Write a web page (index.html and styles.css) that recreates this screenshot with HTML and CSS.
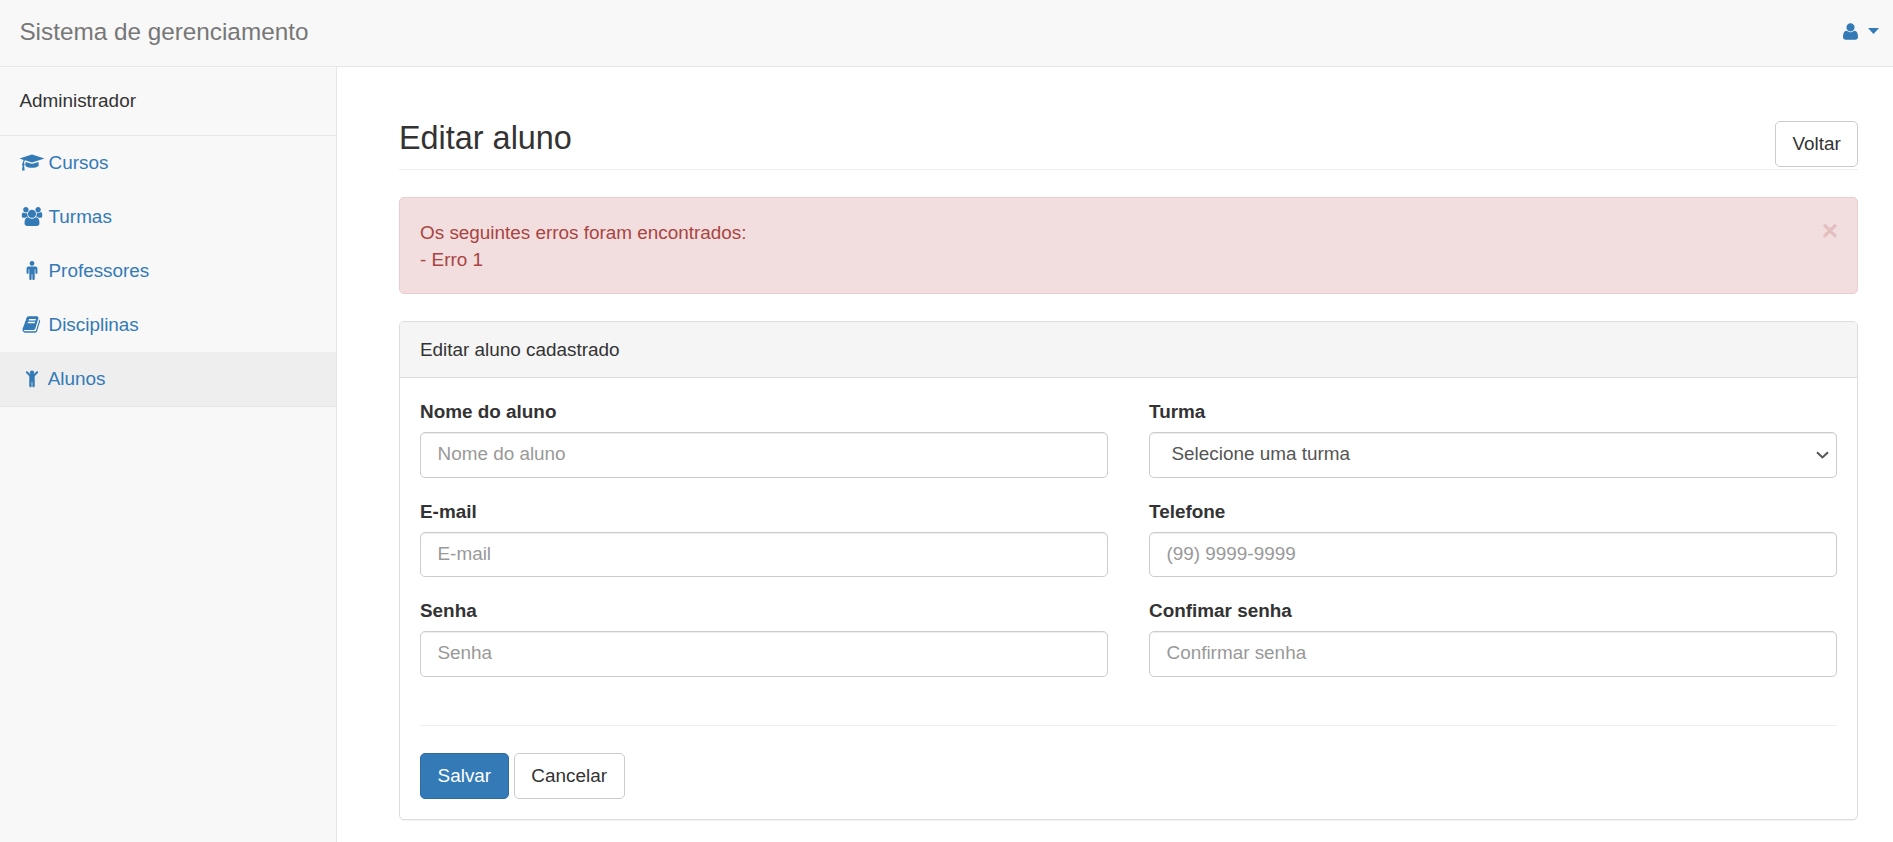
FILE: index.html
```html
<!DOCTYPE html>
<html lang="pt-BR">
<head>
<meta charset="utf-8">
<title>Editar aluno</title>
<link rel="stylesheet" href="styles.css">
</head>
<body>
<header class="navbar">
  <a class="brand">Sistema de gerenciamento</a>
  <a class="user-menu">
    <svg class="icon icon-user" viewBox="0 0 1792 1792"><path d="M1600 1405q0 120-73 189.5t-194 69.5h-874q-121 0-194-69.5t-73-189.5q0-53 3.5-103.5t14-109 26.5-108.5 43-97.5 62-81 85.5-53.5 111.5-20q9 0 42 21.5t74.5 48 108 48 133.5 21.5 133.5-21.5 108-48 74.5-48 42-21.5q61 0 111.5 20t85.5 53.5 62 81 43 97.5 26.5 108.5 14 109 3.5 103.5zm-320-893q0 159-112.5 271.5t-271.5 112.5-271.5-112.5-112.5-271.5 112.5-271.5 271.5-112.5 271.5 112.5 112.5 271.5z"/></svg>
    <svg class="caret" viewBox="0 0 11 6"><path d="M0 0h11L5.5 6z"/></svg>
  </a>
</header>
<div class="layout">
  <nav class="sidebar">
    <div class="role">Administrador</div>
    <a class="item"><svg class="icon" viewBox="0 0 2304 1792"><path d="M1774 836l18 316q4 69-82 128t-235 93.5-323 34.5-323-34.5-235-93.5-82-128l18-316 574 181q22 7 48 7t48-7zm530-324q0 23-22 31l-1120 352q-4 1-10 1t-10-1l-652-206q-43 34-71 111.5t-34 178.5q63 36 63 109 0 69-58 107l58 433q2 14-8 25-9 11-24 11h-192q-15 0-24-11-10-11-8-25l58-433q-58-38-58-107 0-73 65-111 11-207 98-330l-333-104q-22-8-22-31t22-31l1120-352q4-1 10-1t10 1l1120 352q22 8 22 31z"/></svg>Cursos</a>
    <a class="item"><svg class="icon" viewBox="0 0 2048 1792"><path d="M657 896q-162 5-265 128h-134q-82 0-138-40.5t-56-118.5q0-353 124-353 6 0 43.5 21t97.5 42.5 119 21.5q67 0 133-23-5 37-5 66 0 159 90 292zm1071 637q0 120-73 189.5t-194 69.5h-874q-121 0-194-69.5t-73-189.5q0-53 3.5-103.5t14-109 26.5-108.5 43-97.5 62-81 85.5-53.5 111.5-20q10 0 43 21.5t73 48 107 48 135 21.5 135-21.5 107-48 73-48 43-21.5q61 0 111.5 20t85.5 53.5 62 81 43 97.5 26.5 108.5 14 109 3.5 103.5zm-1024-1277q0 106-75 181t-181 75-181-75-75-181 75-181 181-75 181 75 75 181zm704 384q0 159-112.5 271.5t-271.5 112.5-271.5-112.5-112.5-271.5 112.5-271.5 271.5-112.5 271.5 112.5 112.5 271.5zm576 225q0 78-56 118.5t-138 40.5h-134q-103-123-265-128 90-133 90-292 0-29-5-66 66 23 133 23 59 0 119-21.5t97.5-42.5 43.5-21q124 0 124 353zm-128-609q0 106-75 181t-181 75-181-75-75-181 75-181 181-75 181 75 75 181z"/></svg>Turmas</a>
    <a class="item"><svg class="icon" viewBox="0 0 1792 1792"><path d="M1408 704v416q0 40-28 68t-68 28-68-28-28-68v-352h-64v912q0 46-33 79t-79 33-79-33-33-79v-464h-64v464q0 46-33 79t-79 33-79-33-33-79v-912h-64v352q0 40-28 68t-68 28-68-28-28-68v-416q0-80 56-136t136-56h640q80 0 136 56t56 136z"/><circle cx="896" cy="224" r="224"/></svg>Professores</a>
    <a class="item"><svg class="icon" viewBox="0 0 1792 1792"><path d="M1639 478q40 57 18 129l-275 906q-19 64-76.5 107.5t-122.5 43.5h-923q-77 0-148.5-53.5t-99.5-131.5q-24-67-2-127 0-4 3-27t4-37q1-8-3-21.5t-3-19.5q2-11 8-21t16.5-23.5 16.5-23.5q23-38 45-91.5t30-91.5q3-10 .5-30t-.5-28q3-11 17-28t17-23q21-36 42-92t25-90q1-9-2.5-32t.5-28q4-13 22-30.5t22-22.5q19-26 42.5-84.5t27.5-96.5q1-8-3-25.5t-2-26.5q2-8 9-18t18-23 17-21q8-12 16.5-30.5t15-35 16-36 19.5-32 26.5-23.5 36-11.5 47.5 5.5l-1 3q38-9 51-9h761q74 0 114 56t18 130l-274 906q-36 119-71.5 153.5t-128.5 34.5h-869q-27 0-38 15-11 16-1 43 24 70 144 70h923q29 0 56-15.5t35-41.5l300-987q7-22 5-57 38 15 59 43zm-1064 2q-4 13 2 22.5t20 9.5h608q13 0 25.5-9.5t16.5-22.5l21-64q4-13-2-22.5t-20-9.5h-608q-13 0-25.5 9.5t-16.5 22.5zm-83 256q-4 13 2 22.5t20 9.5h608q13 0 25.5-9.5t16.5-22.5l21-64q4-13-2-22.5t-20-9.5h-608q-13 0-25.5 9.5t-16.5 22.5z"/></svg>Disciplinas</a>
    <a class="item active"><svg class="icon" viewBox="0 0 1792 1792"><path d="M1444 380l-292 292v940q0 46-33 79t-79 33-79-33-33-79v-400h-64v400q0 46-33 79t-79 33-79-33-33-79v-940l-292-292q-28-28-28-68t28-68 68-28 68 28l228 228h368l228-228q28-28 68-28t68 28 28 68-28 68z"/><circle cx="896" cy="340" r="204"/></svg>Alunos</a>
  </nav>
  <main class="content">
    <div class="page-header">
      <h1>Editar aluno</h1>
      <button class="btn btn-back">Voltar</button>
    </div>
    <div class="alert">
      <div>Os seguintes erros foram encontrados:<br>- Erro 1</div>
      <span class="close">×</span>
    </div>
    <section class="panel">
      <div class="panel-heading">Editar aluno cadastrado</div>
      <form class="panel-body">
        <div class="fields">
          <label class="field">Nome do aluno<input class="control" type="text" placeholder="Nome do aluno"></label>
          <label class="field">Turma
            <span class="select-wrap">
              <select class="control select"><option>Selecione uma turma</option></select>
              <svg class="chevron" viewBox="0 0 13 8"><path d="M1 1.2l5.5 5.2L12 1.2"/></svg>
            </span>
          </label>
          <label class="field">E-mail<input class="control" type="email" placeholder="E-mail"></label>
          <label class="field">Telefone<input class="control" type="text" placeholder="(99) 9999-9999"></label>
          <label class="field">Senha<input class="control" type="password" placeholder="Senha"></label>
          <label class="field">Confimar senha<input class="control" type="password" placeholder="Confirmar senha"></label>
        </div>
        <div class="actions">
          <button class="btn btn-primary" type="button">Salvar</button>
          <button class="btn" type="button">Cancelar</button>
        </div>
      </form>
    </section>
  </main>
</div>
</body>
</html>
```

FILE: styles.css
```css
* { box-sizing: border-box; }
body {
  margin: 0;
  height: 842px;
  overflow: hidden;
  display: flex;
  flex-direction: column;
  background: #fff;
  color: #333;
  font: 18.9px/27px "Liberation Sans", Arial, sans-serif;
}
.navbar {
  flex: none;
  height: 67px;
  display: flex;
  justify-content: space-between;
  align-items: center;
  padding: 0 14px 2px 19.4px;
  background: #f8f8f8;
  border-bottom: 1px solid #e7e7e7;
}
.brand { padding-bottom: 1px; color: #777; font-size: 24.3px; }
.user-menu {
  display: flex;
  align-items: center;
  gap: 8px;
  padding-bottom: 2px;
  color: #337ab7;
}
.icon { width: 24px; height: 19px; flex: none; fill: currentColor; }
.icon-user { width: 19px; }
.caret { width: 11px; height: 6px; fill: currentColor; }
.layout { flex: 1; display: flex; min-height: 0; }
.sidebar {
  width: 337px;
  flex: none;
  background: #f8f8f8;
  border-right: 1px solid #e7e7e7;
}
.role { height: 69px; padding: 20px 19.4px; border-bottom: 1px solid #e7e7e7; }
.item {
  height: 54px;
  display: flex;
  align-items: center;
  gap: 5px;
  padding: 0 0 2px 19.5px;
  color: #337ab7;
}
.item.active {
  height: 55px;
  gap: 4.2px;
  background: #eee;
  border-bottom: 1px solid #e7e7e7;
}
.content { flex: 1; padding: 54px 35px 0 62px; }
.page-header {
  height: 49px;
  display: flex;
  justify-content: space-between;
  align-items: flex-start;
  border-bottom: 1px solid #eee;
}
h1 { margin: 0; font-size: 32.4px; font-weight: 400; line-height: 35px; }
.btn {
  height: 46px;
  padding: 0 16.6px 1px;
  border: 1px solid #ccc;
  border-radius: 5px;
  background: #fff;
  color: #333;
  font: inherit;
}
.btn-back { padding: 0 16.3px 1px; }
.btn-primary { background: #337ab7; border-color: #2e6da4; color: #fff; }
.alert {
  height: 97px;
  margin-top: 27px;
  padding: 21px 20px;
  display: flex;
  justify-content: space-between;
  background: #f2dede;
  border: 1px solid #ebccd1;
  border-radius: 5px;
  color: #a94442;
}
.close {
  margin: -2px -1px 0 0;
  font-size: 28px;
  font-weight: 700;
  line-height: 27px;
  opacity: .2;
}
.panel {
  height: 499px;
  margin-top: 27px;
  border: 1px solid #ddd;
  border-radius: 5px;
  box-shadow: 0 1px 1px rgba(0, 0, 0, .05);
}
.panel-heading {
  height: 56px;
  padding: 14px 20px;
  background: #f5f5f5;
  border-bottom: 1px solid #ddd;
  border-radius: 4px 4px 0 0;
}
.panel-body { padding: 20px; }
.fields {
  display: grid;
  grid-template-columns: 1fr 1fr;
  column-gap: 41px;
  row-gap: 20px;
}
.field { display: flex; flex-direction: column; gap: 7px; font-weight: 700; }
.control {
  width: 100%;
  height: 45.6px;
  padding: 0 16.5px 1px;
  border: 1px solid #ccc;
  border-radius: 5px;
  background: #fff;
  color: #555;
  font: inherit;
  font-weight: 400;
  box-shadow: inset 0 1px 1px rgba(0, 0, 0, .075);
}
.control::placeholder { color: #999; opacity: 1; }
.select-wrap { display: grid; align-items: center; }
.select-wrap > * { grid-area: 1 / 1; }
.select { appearance: none; padding-left: 21.5px; padding-bottom: 2px; }
.chevron {
  width: 13px;
  height: 8px;
  margin-right: 8px;
  justify-self: end;
  fill: none;
  stroke: #555;
  stroke-width: 2;
  pointer-events: none;
}
.actions {
  margin-top: 48px;
  padding-top: 27px;
  display: flex;
  gap: 5px;
  border-top: 1px solid #eee;
}
```
